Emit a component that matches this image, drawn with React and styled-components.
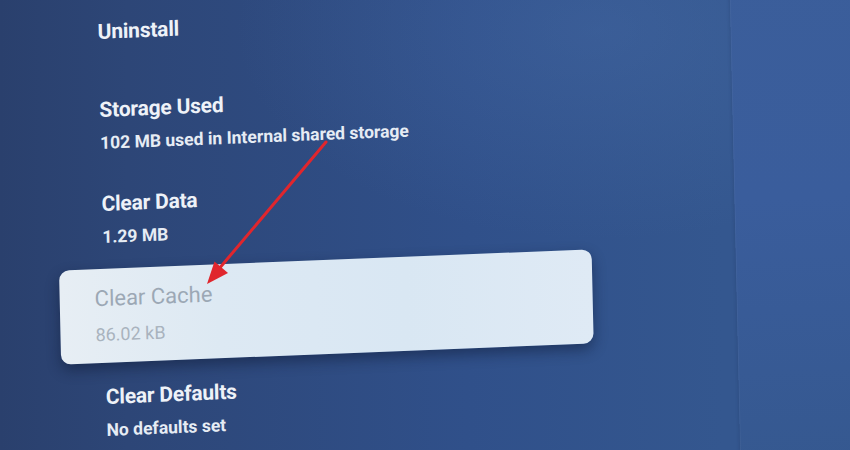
import React from 'react'
import styled, { createGlobalStyle } from 'styled-components'

const GlobalStyle = createGlobalStyle`
  html, body {
    margin: 0;
    padding: 0;
  }
  body {
    background: #2d4677;
    font-family: Roboto, "Noto Sans", sans-serif;
  }
`

const Viewport = styled.div`
  position: relative;
  width: 850px;
  height: 450px;
  overflow: hidden;
  background:
    radial-gradient(ellipse 520px 300px at 600px 30px, rgba(78, 116, 176, 0.3), transparent 70%),
    linear-gradient(90deg, #2a406d 0%, #2d4677 15%, #30508a 55%, #34578f 85%);
`

// the photo of the TV is taken at a slight angle
const Screen = styled.div`
  display: flex;
  height: 450px;
  transform-origin: 100px 225px;
  transform: skewX(1.3deg) skewY(-2.3deg);
`

const Main = styled.main`
  flex: 1;
`

const Side = styled.aside`
  width: 145px;
  margin: -60px -30px -60px 0;
  background: linear-gradient(180deg, #3b5e9a 0%, #3a5d9c 50%, #35588f 100%);
  box-shadow: -1px 0 3px rgba(20, 35, 70, 0.15), inset 1px 0 0 rgba(255, 255, 255, 0.04);
`

const List = styled.div`
  display: flex;
  flex-direction: column;
  gap: 5px;
  width: 533px;
  margin: -13px 0 0 58px;
`

const Row = styled.div`
  box-sizing: border-box;
  display: flex;
  flex-direction: column;
  justify-content: center;
  gap: ${p => (p.$focused ? '12px' : '11px')};
  min-height: ${p => (p.$focused ? '94px' : '89px')};
  padding: ${p => (p.$focused ? '17px 35px' : '17px 0 17px 44px')};
  border-radius: 10px;
  background: ${p =>
    p.$focused
      ? 'linear-gradient(90deg, #e7eef4 0%, #dde9f3 30%, #d9e7f3 65%, #dfeaf5 100%)'
      : 'transparent'};
  box-shadow: ${p => (p.$focused ? '0 6px 14px rgba(10, 20, 45, 0.45)' : 'none')};
`

const Title = styled.div`
  font-size: ${p => (p.$focused ? '22px' : '21px')};
  line-height: ${p => (p.$focused ? '26px' : '24px')};
  font-weight: ${p => (p.$focused ? 400 : 700)};
  color: ${p => (p.$focused ? '#9ca8b5' : '#eef2f8')};
  letter-spacing: ${p => (p.$focused ? '0' : '-0.2px')};
  white-space: nowrap;
`

const Sub = styled.div`
  font-size: ${p => (p.$focused ? '18px' : '17.5px')};
  line-height: ${p => (p.$focused ? '22px' : '20px')};
  font-weight: ${p => (p.$focused ? 400 : 700)};
  color: ${p => (p.$focused ? '#a9b3be' : '#e6ecf4')};
  letter-spacing: 0;
  white-space: nowrap;
`

const Arrow = styled.svg`
  position: absolute;
  left: 0;
  top: 0;
  pointer-events: none;
`

const items = [
  { title: 'Uninstall' },
  { title: 'Storage Used', sub: '102 MB used in Internal shared storage' },
  { title: 'Clear Data', sub: '1.29 MB' },
  { title: 'Clear Cache', sub: '86.02 kB', focused: true },
  { title: 'Clear Defaults', sub: 'No defaults set' },
]

export default function App() {
  return (
    <>
      <GlobalStyle />
      <Viewport>
        <Screen>
          <Main>
            <List>
              {items.map(item => (
                <Row key={item.title} $focused={item.focused}>
                  <Title $focused={item.focused}>{item.title}</Title>
                  {item.sub && <Sub $focused={item.focused}>{item.sub}</Sub>}
                </Row>
              ))}
            </List>
          </Main>
          <Side />
        </Screen>
        <Arrow width="850" height="450" viewBox="0 0 850 450">
          <line x1="326" y1="142" x2="218" y2="270" stroke="#e0262d" strokeWidth="3" strokeLinecap="round" />
          <polygon points="207,284 228,273 214.5,261.4" fill="#e0262d" />
        </Arrow>
      </Viewport>
    </>
  )
}
